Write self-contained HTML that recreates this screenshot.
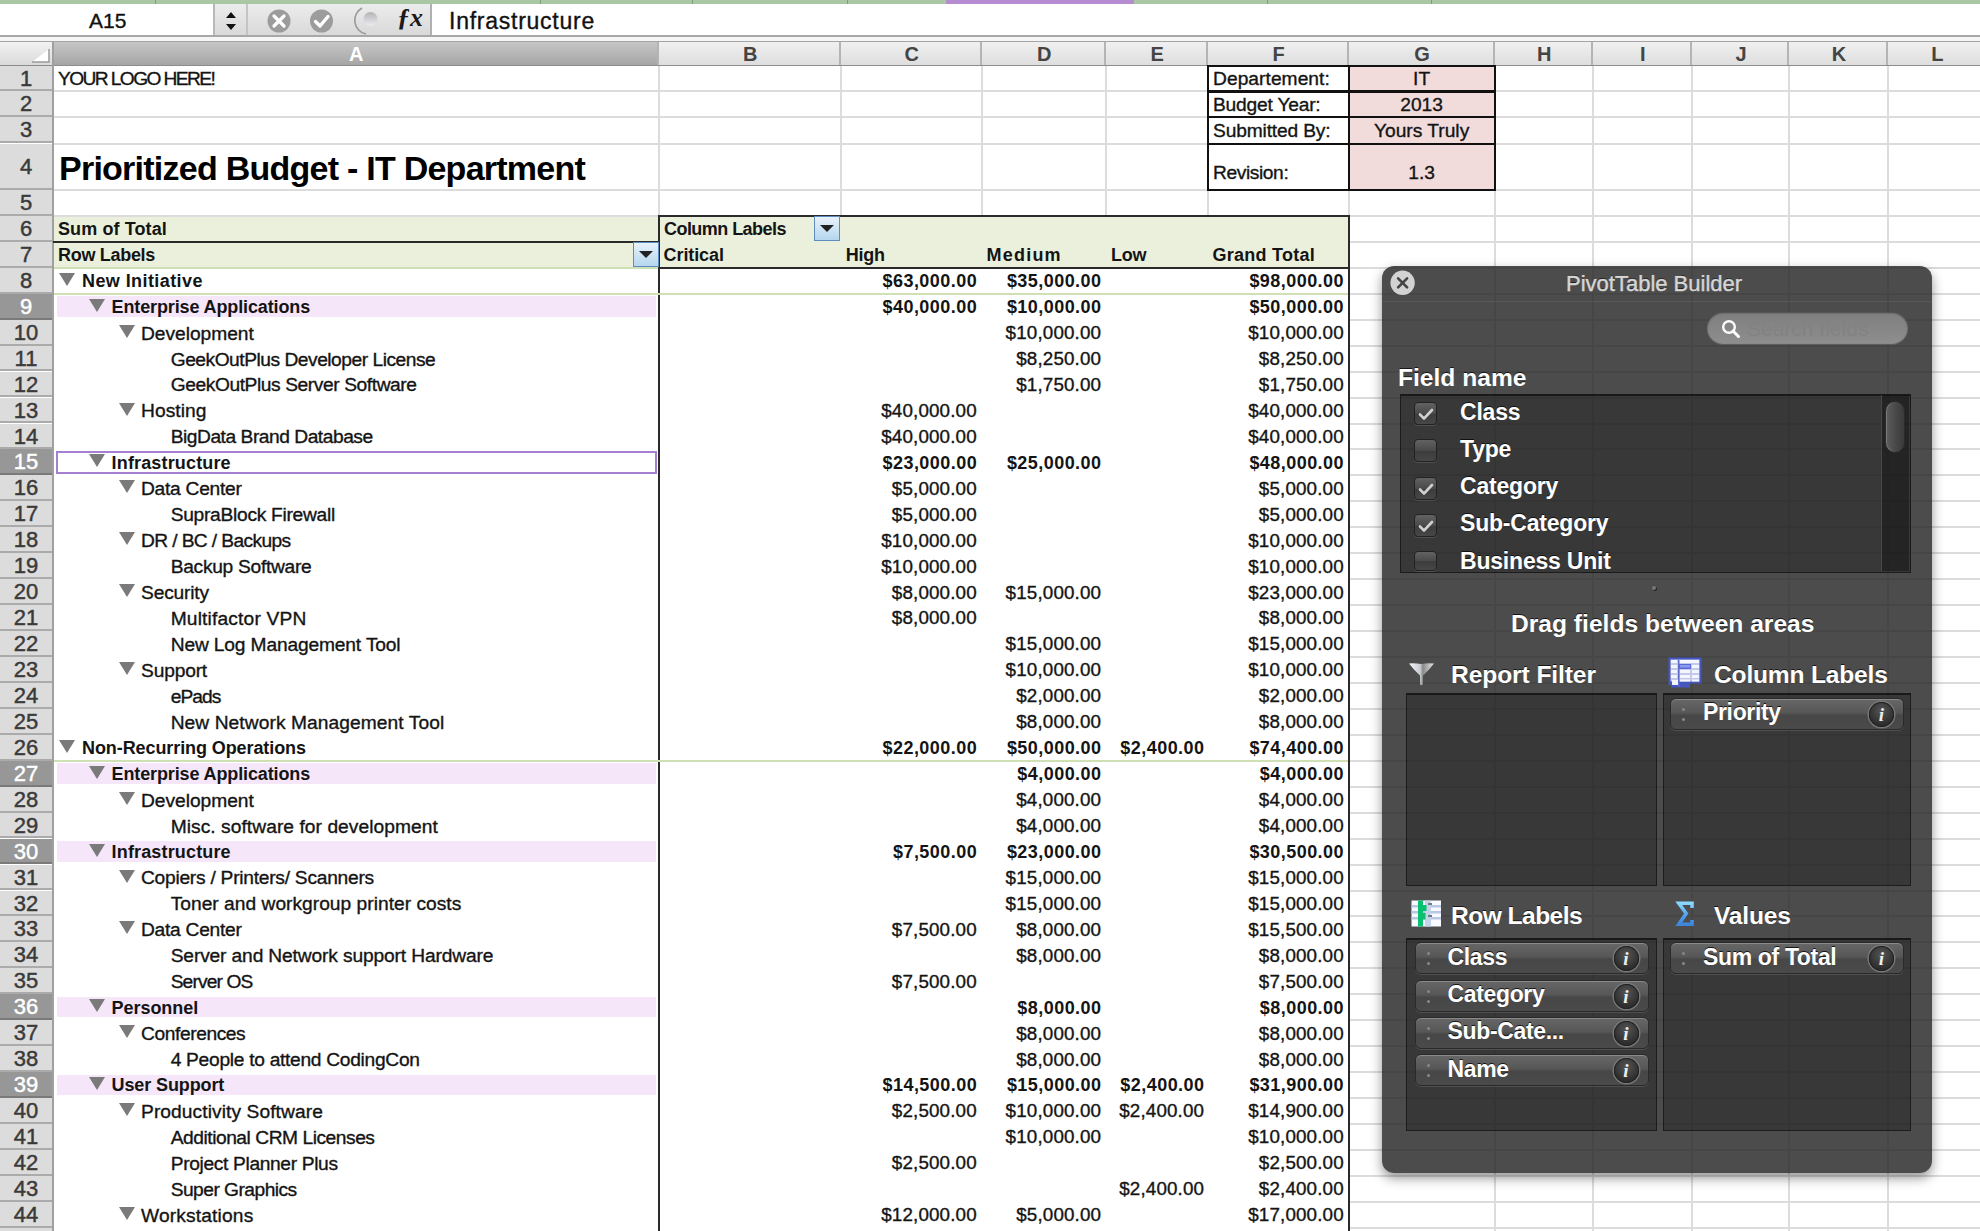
<!DOCTYPE html><html><head><meta charset="utf-8"><style>
*{margin:0;padding:0;box-sizing:border-box}
html,body{width:1980px;height:1231px;overflow:hidden;background:#fff}
body{position:relative;font-family:"Liberation Sans",sans-serif;color:#111}
.a{position:absolute}
.t{position:absolute;white-space:nowrap;font-size:19.2px;line-height:26px;color:#141414;-webkit-text-stroke:0.35px #141414}
.t.b{-webkit-text-stroke:0;font-size:18px}
.b{font-weight:bold}
.hl{position:absolute;height:2px;background:#dcdcdc}
.vl{position:absolute;width:2px;background:#dcdcdc}
.rh{position:absolute;left:0;width:52px;background:#dcdcdc;border-bottom:2px solid #ababab;text-align:center;font-size:22px;color:#3a3a3a;-webkit-text-stroke:0.45px #3a3a3a}
.rh.s{-webkit-text-stroke:0.45px #fff}
.rh.s{background:#979797;border-bottom-color:#7a7a7a;color:#fff}
.ch{position:absolute;top:42px;height:23px;background:linear-gradient(#f0f0f0,#dedede);border-right:2px solid #b4b4b4;text-align:center;font-size:20px;line-height:24px;color:#444;font-weight:bold;padding-left:3px}
.ch.s{background:linear-gradient(#c6c6c6,#a6a6a6);color:#fff}
.tri{position:absolute;width:0;height:0;border-left:8px solid transparent;border-right:8px solid transparent;border-top:13px solid #7a7a7a}
.num{position:absolute;white-space:nowrap;font-size:18.8px;line-height:26px;text-align:right;color:#141414;letter-spacing:0.16px;-webkit-text-stroke:0.35px #141414}
.num.b{-webkit-text-stroke:0;font-size:18px;letter-spacing:0.45px}

.pnl{position:absolute;left:1381.5px;top:266.0px;width:550.0px;height:906.5px;border-radius:12px;background:rgba(36,36,36,0.82);box-shadow:0 5px 12px rgba(0,0,0,0.42)}
.pt{position:absolute;white-space:nowrap;color:#fff;font-weight:bold;text-shadow:0 -1px 0 rgba(0,0,0,0.7)}
.box{position:absolute;background:rgba(14,14,14,0.33);border:1.5px solid rgba(0,0,0,0.5);border-top:2.5px solid rgba(0,0,0,0.55)}
.pill{position:absolute;height:32px;border-radius:6px;background:linear-gradient(#676767 0%,#575757 45%,#474747 55%,#4a4a4a 100%);border:1px solid #2a2a2a;box-shadow:inset 0 1px 0 #8a8a8a, 0 1px 0 rgba(255,255,255,0.12)}
.pill .pl{position:absolute;left:32px;top:-0.5px;line-height:28px;font-size:23px;letter-spacing:-0.35px;font-weight:bold;color:#fff;text-shadow:0 -1px 0 rgba(0,0,0,0.8)}
.pill .info{position:absolute;right:9px;top:3px;width:25px;height:25px;border-radius:50%;background:radial-gradient(circle at 50% 35%,#555,#2c2c2c 70%);box-shadow:0 0 0 1.5px #777, inset 0 0 0 1px #222}
.pill .info span{position:absolute;left:0;width:25px;top:0;line-height:25px;text-align:center;font-family:'Liberation Serif';font-style:italic;font-weight:bold;font-size:19px;color:#eee}
.pill .grip{position:absolute;left:11px;top:9px;width:3px;height:3px;border-radius:50%;background:#888;box-shadow:0 10px 0 #888}
.cb{position:absolute;left:1414px;width:23px;height:23px;border-radius:4px;background:linear-gradient(#626262,#4a4a4a 50%,#3c3c3c 52%,#474747);border:1px solid #222;box-shadow:0 1px 0 rgba(255,255,255,0.12)}
</style></head><body>
<div class="a" style="left:0;top:0;width:1980px;height:4px;background:#a9c7a3"></div>
<div class="a" style="left:946px;top:0;width:188px;height:4px;background:#b58bd2"></div>
<div class="a" style="left:155px;top:0;width:1px;height:4px;background:#7f9e7b"></div>
<div class="a" style="left:540px;top:0;width:1px;height:4px;background:#7f9e7b"></div>
<div class="a" style="left:692px;top:0;width:1px;height:4px;background:#7f9e7b"></div>
<div class="a" style="left:847px;top:0;width:1px;height:4px;background:#7f9e7b"></div>
<div class="a" style="left:1267px;top:0;width:1px;height:4px;background:#7f9e7b"></div>
<div class="a" style="left:1431px;top:0;width:1px;height:4px;background:#7f9e7b"></div>
<div class="a" style="left:0;top:4px;width:1980px;height:31px;background:#fff"></div>
<div class="a" style="left:214px;top:4px;width:217px;height:31px;background:linear-gradient(#ececec,#d9d9d9)"></div>
<div class="a" style="left:213px;top:4px;width:2px;height:31px;background:#b8b8b8"></div>
<div class="a" style="left:246px;top:4px;width:2px;height:31px;background:#c4c4c4"></div>
<div class="a" style="left:430px;top:4px;width:2px;height:31px;background:#b0b0b0"></div>
<div class="a" style="left:0;top:35px;width:1980px;height:2px;background:#a8a8a8"></div>
<div class="a" style="left:0;top:37px;width:1980px;height:4px;background:#f6f6f6"></div>
<div class="t" style="left:89px;top:7px;font-size:21px;line-height:28px;color:#111">A15</div>
<svg class="a" style="left:222px;top:10px" width="18" height="22" viewBox="0 0 18 22"><path d="M9 2 L14 8 L4 8 Z M9 20 L14 14 L4 14 Z" fill="#111"/></svg>
<svg class="a" style="left:262px;top:6px" width="175" height="30" viewBox="0 0 175 30">
<circle cx="17" cy="15" r="11.5" fill="#9c9c9c"/>
<path d="M12 10 L22 20 M22 10 L12 20" stroke="#fff" stroke-width="3.2" stroke-linecap="round"/>
<circle cx="59.5" cy="15" r="11.5" fill="#9c9c9c"/>
<path d="M53.5 15.5 L58 20 L66 10.5" stroke="#fff" stroke-width="3.4" fill="none" stroke-linecap="round" stroke-linejoin="round"/>
<path d="M100 2 A 14 14 0 0 0 104 28" stroke="#9a9a9a" stroke-width="1.6" fill="none"/>
<circle cx="108.5" cy="13" r="7" fill="url(#gd)"/>
<defs><linearGradient id="gd" x1="0" y1="0" x2="0" y2="1"><stop offset="0" stop-color="#b4b4b8"/><stop offset="1" stop-color="#ececf0"/></linearGradient></defs>
</svg>
<div class="t" style="left:397px;top:3px;font-family:'Liberation Serif';font-style:italic;font-weight:bold;font-size:26px;line-height:30px;color:#1a1a1a;-webkit-text-stroke:0">&#402;x</div>
<div class="t" style="left:449px;top:6px;font-size:23px;line-height:30px;letter-spacing:0.75px;color:#111">Infrastructure</div>
<div class="a" style="left:0;top:41px;width:1980px;height:1.5px;background:#a4a4a4"></div>
<div class="a" style="left:0;top:42px;width:53px;height:23px;background:linear-gradient(#f2f2f2,#dadada)"></div>
<svg class="a" style="left:30px;top:47px" width="22" height="16"><path d="M2 15 L19 15 L19 2 Z" fill="#fff"/><path d="M19 2 L19 15 L2 15" stroke="#9a9a9a" stroke-width="1.5" fill="none"/></svg>
<div class="ch s" style="left:52.7px;width:605.9px">A</div>
<div class="ch" style="left:658.6px;width:182.1px">B</div>
<div class="ch" style="left:840.7px;width:140.9px">C</div>
<div class="ch" style="left:981.6px;width:124.4px">D</div>
<div class="ch" style="left:1106.0px;width:101.5px">E</div>
<div class="ch" style="left:1207.5px;width:141.1px">F</div>
<div class="ch" style="left:1348.6px;width:146.0px">G</div>
<div class="ch" style="left:1494.6px;width:98.5px">H</div>
<div class="ch" style="left:1593.1px;width:98.5px">I</div>
<div class="ch" style="left:1691.6px;width:97.7px">J</div>
<div class="ch" style="left:1789.3px;width:98.5px">K</div>
<div class="ch" style="left:1887.8px;width:98.2px">L</div>
<div class="a" style="left:0;top:64.5px;width:1980px;height:1.5px;background:#8c8c8c"></div>
<div class="hl" style="left:53px;top:90.4px;width:1930px"></div>
<div class="hl" style="left:53px;top:116.3px;width:1930px"></div>
<div class="hl" style="left:53px;top:142.5px;width:1930px"></div>
<div class="hl" style="left:53px;top:188.8px;width:1930px"></div>
<div class="hl" style="left:53px;top:215.0px;width:1930px"></div>
<div class="hl" style="left:1349px;top:240.8px;width:640px"></div>
<div class="hl" style="left:1349px;top:266.8px;width:640px"></div>
<div class="hl" style="left:1349px;top:292.7px;width:640px"></div>
<div class="hl" style="left:1349px;top:318.7px;width:640px"></div>
<div class="hl" style="left:1349px;top:344.6px;width:640px"></div>
<div class="hl" style="left:1349px;top:370.6px;width:640px"></div>
<div class="hl" style="left:1349px;top:396.5px;width:640px"></div>
<div class="hl" style="left:1349px;top:422.5px;width:640px"></div>
<div class="hl" style="left:1349px;top:448.4px;width:640px"></div>
<div class="hl" style="left:1349px;top:474.4px;width:640px"></div>
<div class="hl" style="left:1349px;top:500.3px;width:640px"></div>
<div class="hl" style="left:1349px;top:526.2px;width:640px"></div>
<div class="hl" style="left:1349px;top:552.2px;width:640px"></div>
<div class="hl" style="left:1349px;top:578.1px;width:640px"></div>
<div class="hl" style="left:1349px;top:604.1px;width:640px"></div>
<div class="hl" style="left:1349px;top:630.0px;width:640px"></div>
<div class="hl" style="left:1349px;top:656.0px;width:640px"></div>
<div class="hl" style="left:1349px;top:681.9px;width:640px"></div>
<div class="hl" style="left:1349px;top:707.8px;width:640px"></div>
<div class="hl" style="left:1349px;top:733.8px;width:640px"></div>
<div class="hl" style="left:1349px;top:759.7px;width:640px"></div>
<div class="hl" style="left:1349px;top:785.7px;width:640px"></div>
<div class="hl" style="left:1349px;top:811.6px;width:640px"></div>
<div class="hl" style="left:1349px;top:837.6px;width:640px"></div>
<div class="hl" style="left:1349px;top:863.5px;width:640px"></div>
<div class="hl" style="left:1349px;top:889.5px;width:640px"></div>
<div class="hl" style="left:1349px;top:915.4px;width:640px"></div>
<div class="hl" style="left:1349px;top:941.3px;width:640px"></div>
<div class="hl" style="left:1349px;top:967.3px;width:640px"></div>
<div class="hl" style="left:1349px;top:993.2px;width:640px"></div>
<div class="hl" style="left:1349px;top:1019.2px;width:640px"></div>
<div class="hl" style="left:1349px;top:1045.1px;width:640px"></div>
<div class="hl" style="left:1349px;top:1071.1px;width:640px"></div>
<div class="hl" style="left:1349px;top:1097.0px;width:640px"></div>
<div class="hl" style="left:1349px;top:1123.0px;width:640px"></div>
<div class="hl" style="left:1349px;top:1148.9px;width:640px"></div>
<div class="hl" style="left:1349px;top:1174.8px;width:640px"></div>
<div class="hl" style="left:1349px;top:1200.8px;width:640px"></div>
<div class="hl" style="left:1349px;top:1226.7px;width:640px"></div>
<div class="hl" style="left:1349px;top:1252.7px;width:640px"></div>
<div class="vl" style="left:657.6px;top:66px;height:150.0px"></div>
<div class="vl" style="left:839.7px;top:66px;height:150.0px"></div>
<div class="vl" style="left:980.6px;top:66px;height:150.0px"></div>
<div class="vl" style="left:1105.0px;top:66px;height:150.0px"></div>
<div class="vl" style="left:1206.5px;top:66px;height:150.0px"></div>
<div class="vl" style="left:1347.6px;top:66px;height:1170px"></div>
<div class="vl" style="left:1493.6px;top:66px;height:1170px"></div>
<div class="vl" style="left:1592.1px;top:66px;height:1170px"></div>
<div class="vl" style="left:1690.6px;top:66px;height:1170px"></div>
<div class="vl" style="left:1788.3px;top:66px;height:1170px"></div>
<div class="vl" style="left:1886.8px;top:66px;height:1170px"></div>
<div class="vl" style="left:1985.0px;top:66px;height:1170px"></div>
<div class="rh" style="top:65.5px;height:25.9px;line-height:25.9px">1</div>
<div class="rh" style="top:91.4px;height:25.9px;line-height:25.9px">2</div>
<div class="rh" style="top:117.3px;height:26.2px;line-height:26.2px">3</div>
<div class="rh" style="top:143.5px;height:46.3px;line-height:46.3px">4</div>
<div class="rh" style="top:189.8px;height:26.2px;line-height:26.2px">5</div>
<div class="rh" style="top:216.0px;height:25.8px;line-height:25.8px">6</div>
<div class="rh" style="top:241.8px;height:26.0px;line-height:26.0px">7</div>
<div class="rh" style="top:267.8px;height:25.9px;line-height:25.9px">8</div>
<div class="rh s" style="top:293.7px;height:25.9px;line-height:25.9px">9</div>
<div class="rh" style="top:319.7px;height:25.9px;line-height:25.9px">10</div>
<div class="rh" style="top:345.6px;height:25.9px;line-height:25.9px">11</div>
<div class="rh" style="top:371.6px;height:25.9px;line-height:25.9px">12</div>
<div class="rh" style="top:397.5px;height:25.9px;line-height:25.9px">13</div>
<div class="rh" style="top:423.5px;height:25.9px;line-height:25.9px">14</div>
<div class="rh s" style="top:449.4px;height:25.9px;line-height:25.9px">15</div>
<div class="rh" style="top:475.4px;height:25.9px;line-height:25.9px">16</div>
<div class="rh" style="top:501.3px;height:25.9px;line-height:25.9px">17</div>
<div class="rh" style="top:527.2px;height:25.9px;line-height:25.9px">18</div>
<div class="rh" style="top:553.2px;height:25.9px;line-height:25.9px">19</div>
<div class="rh" style="top:579.1px;height:25.9px;line-height:25.9px">20</div>
<div class="rh" style="top:605.1px;height:25.9px;line-height:25.9px">21</div>
<div class="rh" style="top:631.0px;height:25.9px;line-height:25.9px">22</div>
<div class="rh" style="top:657.0px;height:25.9px;line-height:25.9px">23</div>
<div class="rh" style="top:682.9px;height:25.9px;line-height:25.9px">24</div>
<div class="rh" style="top:708.8px;height:25.9px;line-height:25.9px">25</div>
<div class="rh" style="top:734.8px;height:25.9px;line-height:25.9px">26</div>
<div class="rh s" style="top:760.7px;height:25.9px;line-height:25.9px">27</div>
<div class="rh" style="top:786.7px;height:25.9px;line-height:25.9px">28</div>
<div class="rh" style="top:812.6px;height:25.9px;line-height:25.9px">29</div>
<div class="rh s" style="top:838.6px;height:25.9px;line-height:25.9px">30</div>
<div class="rh" style="top:864.5px;height:25.9px;line-height:25.9px">31</div>
<div class="rh" style="top:890.5px;height:25.9px;line-height:25.9px">32</div>
<div class="rh" style="top:916.4px;height:25.9px;line-height:25.9px">33</div>
<div class="rh" style="top:942.3px;height:25.9px;line-height:25.9px">34</div>
<div class="rh" style="top:968.3px;height:25.9px;line-height:25.9px">35</div>
<div class="rh s" style="top:994.2px;height:25.9px;line-height:25.9px">36</div>
<div class="rh" style="top:1020.2px;height:25.9px;line-height:25.9px">37</div>
<div class="rh" style="top:1046.1px;height:25.9px;line-height:25.9px">38</div>
<div class="rh s" style="top:1072.1px;height:25.9px;line-height:25.9px">39</div>
<div class="rh" style="top:1098.0px;height:25.9px;line-height:25.9px">40</div>
<div class="rh" style="top:1124.0px;height:25.9px;line-height:25.9px">41</div>
<div class="rh" style="top:1149.9px;height:25.9px;line-height:25.9px">42</div>
<div class="rh" style="top:1175.8px;height:25.9px;line-height:25.9px">43</div>
<div class="rh" style="top:1201.8px;height:25.9px;line-height:25.9px">44</div>
<div class="rh" style="top:1227.7px;height:25.9px;line-height:25.9px">45</div>
<div class="a" style="left:51.5px;top:42px;width:2px;height:1200px;background:#a0a0a0"></div>
<div class="t" style="left:58.0px;top:66.3px;letter-spacing:-1.6px">YOUR LOGO HERE!</div>
<div class="t b" style="left:59px;top:147.8px;font-size:34px;line-height:40px;letter-spacing:-0.75px;color:#000">Prioritized Budget - IT Department</div>
<div class="a" style="left:1348.6px;top:66.0px;width:146.0px;height:124.3px;background:#f2dcdb"></div>
<div class="a" style="left:1206.5px;top:64.5px;width:289.1px;height:2.2px;background:#111"></div>
<div class="a" style="left:1206.5px;top:90.4px;width:289.1px;height:2.2px;background:#111"></div>
<div class="a" style="left:1206.5px;top:116.3px;width:289.1px;height:2.2px;background:#111"></div>
<div class="a" style="left:1206.5px;top:142.5px;width:289.1px;height:2.2px;background:#111"></div>
<div class="a" style="left:1206.5px;top:188.8px;width:289.1px;height:2.2px;background:#111"></div>
<div class="a" style="left:1206.5px;top:64.5px;width:2.2px;height:126.3px;background:#111"></div>
<div class="a" style="left:1347.6px;top:64.5px;width:2.2px;height:126.3px;background:#111"></div>
<div class="a" style="left:1493.6px;top:64.5px;width:2.2px;height:126.3px;background:#111"></div>
<div class="t" style="left:1213px;top:66.3px;letter-spacing:0.05px">Departement:</div>
<div class="t" style="left:1348.6px;width:146.0px;text-align:center;top:66.3px">IT</div>
<div class="t" style="left:1213px;top:92.2px;letter-spacing:-0.2px">Budget Year:</div>
<div class="t" style="left:1348.6px;width:146.0px;text-align:center;top:92.2px">2013</div>
<div class="t" style="left:1213px;top:118.4px;letter-spacing:-0.15px">Submitted By:</div>
<div class="t" style="left:1348.6px;width:146.0px;text-align:center;top:118.4px">Yours Truly</div>
<div class="t" style="left:1213px;top:159.8px;letter-spacing:-0.4px">Revision:</div>
<div class="t" style="left:1348.6px;width:146.0px;text-align:center;top:159.8px">1.3</div>
<div class="a" style="left:53.7px;top:217.0px;width:1293.9px;height:50.8px;background:#ebf0dd"></div>
<div class="a" style="left:657.6px;top:215.0px;width:692.0px;height:2.2px;background:#2a2a2a"></div>
<div class="a" style="left:52.7px;top:240.8px;width:605.9px;height:2.2px;background:#2a2a2a"></div>
<div class="a" style="left:657.6px;top:266.8px;width:692.0px;height:2.2px;background:#2a2a2a"></div>
<div class="a" style="left:53.7px;top:266.8px;width:603.9px;height:2px;background:#cfe0b4"></div>
<div class="a" style="left:657.6px;top:215.0px;width:2.2px;height:1240px;background:#2a2a2a"></div>
<div class="a" style="left:1347.6px;top:215.0px;width:2.2px;height:1240px;background:#2a2a2a"></div>
<div class="a" style="left:53.7px;top:292.7px;width:1293.9px;height:2px;background:#cfe0b4"></div>
<div class="a" style="left:53.7px;top:759.7px;width:1293.9px;height:2px;background:#cfe0b4"></div>
<div class="a" style="left:632.5px;top:242.0px;width:26px;height:25px;border:1.5px solid #5e8cc0;background:linear-gradient(#e8f2fa,#b5d6ee)"></div>
<svg class="a" style="left:637.5px;top:250.0px" width="16" height="9"><path d="M1 1 L15 1 L8 8 Z" fill="#222"/></svg>
<div class="a" style="left:813.5px;top:216.2px;width:26px;height:25px;border:1.5px solid #5e8cc0;background:linear-gradient(#e8f2fa,#b5d6ee)"></div>
<svg class="a" style="left:818.5px;top:224.2px" width="16" height="9"><path d="M1 1 L15 1 L8 8 Z" fill="#222"/></svg>
<div class="t b" style="left:58.0px;top:216.1px;letter-spacing:0.1px">Sum of Total</div>
<div class="t b" style="left:58.0px;top:242.1px;letter-spacing:-0.3px">Row Labels</div>
<div class="t b" style="left:664.0px;top:216.1px;letter-spacing:-0.55px">Column Labels</div>
<div class="t b" style="left:663.6px;top:242.1px;letter-spacing:-0.1px">Critical</div>
<div class="t b" style="left:845.7px;top:242.1px;letter-spacing:-0.2px">High</div>
<div class="t b" style="left:986.6px;top:242.1px;letter-spacing:1.2px">Medium</div>
<div class="t b" style="left:1111.0px;top:242.1px;letter-spacing:-0.2px">Low</div>
<div class="t b" style="left:1212.5px;top:242.1px;letter-spacing:0.25px">Grand Total</div>
<div class="tri" style="left:59.0px;top:272.8px"></div>
<div class="t b" style="left:82.0px;top:268.0px;letter-spacing:0.415px">New Initiative</div>
<div class="num b" style="right:1002.9px;top:268.0px">$63,000.00</div>
<div class="num b" style="right:878.5px;top:268.0px">$35,000.00</div>
<div class="num b" style="right:636.0px;top:268.0px">$98,000.00</div>
<div class="a" style="left:56.5px;top:296.4px;width:599px;height:20.6px;background:#f5e6fa"></div>
<div class="tri" style="left:89.0px;top:298.7px"></div>
<div class="t b" style="left:111.6px;top:294.0px;letter-spacing:-0.127px">Enterprise Applications</div>
<div class="num b" style="right:1002.9px;top:294.0px">$40,000.00</div>
<div class="num b" style="right:878.5px;top:294.0px">$10,000.00</div>
<div class="num b" style="right:636.0px;top:294.0px">$50,000.00</div>
<div class="tri" style="left:118.5px;top:324.7px"></div>
<div class="t" style="left:141.0px;top:320.5px;letter-spacing:-0.030px">Development</div>
<div class="num" style="right:878.8px;top:320.0px">$10,000.00</div>
<div class="num" style="right:636.2px;top:320.0px">$10,000.00</div>
<div class="t" style="left:170.7px;top:346.5px;letter-spacing:-0.475px">GeekOutPlus Developer License</div>
<div class="num" style="right:878.8px;top:346.0px">$8,250.00</div>
<div class="num" style="right:636.2px;top:346.0px">$8,250.00</div>
<div class="t" style="left:170.7px;top:372.4px;letter-spacing:-0.412px">GeekOutPlus Server Software</div>
<div class="num" style="right:878.8px;top:371.9px">$1,750.00</div>
<div class="num" style="right:636.2px;top:371.9px">$1,750.00</div>
<div class="tri" style="left:118.5px;top:402.5px"></div>
<div class="t" style="left:141.0px;top:398.4px;letter-spacing:0.050px">Hosting</div>
<div class="num" style="right:1003.2px;top:397.9px">$40,000.00</div>
<div class="num" style="right:636.2px;top:397.9px">$40,000.00</div>
<div class="t" style="left:170.7px;top:424.3px;letter-spacing:-0.467px">BigData Brand Database</div>
<div class="num" style="right:1003.2px;top:423.8px">$40,000.00</div>
<div class="num" style="right:636.2px;top:423.8px">$40,000.00</div>
<div class="a" style="left:55.5px;top:450.6px;width:601px;height:23.5px;border:2px solid #a57fd0"></div>
<div class="tri" style="left:89.0px;top:454.4px"></div>
<div class="t b" style="left:111.6px;top:449.7px;letter-spacing:0.154px">Infrastructure</div>
<div class="num b" style="right:1002.9px;top:449.7px">$23,000.00</div>
<div class="num b" style="right:878.5px;top:449.7px">$25,000.00</div>
<div class="num b" style="right:636.0px;top:449.7px">$48,000.00</div>
<div class="tri" style="left:118.5px;top:480.4px"></div>
<div class="t" style="left:141.0px;top:476.2px;letter-spacing:-0.260px">Data Center</div>
<div class="num" style="right:1003.2px;top:475.7px">$5,000.00</div>
<div class="num" style="right:636.2px;top:475.7px">$5,000.00</div>
<div class="t" style="left:170.7px;top:502.1px;letter-spacing:-0.278px">SupraBlock Firewall</div>
<div class="num" style="right:1003.2px;top:501.6px">$5,000.00</div>
<div class="num" style="right:636.2px;top:501.6px">$5,000.00</div>
<div class="tri" style="left:118.5px;top:532.2px"></div>
<div class="t" style="left:141.0px;top:528.1px;letter-spacing:-0.613px">DR / BC / Backups</div>
<div class="num" style="right:1003.2px;top:527.6px">$10,000.00</div>
<div class="num" style="right:636.2px;top:527.6px">$10,000.00</div>
<div class="t" style="left:170.7px;top:554.0px;letter-spacing:-0.286px">Backup Software</div>
<div class="num" style="right:1003.2px;top:553.5px">$10,000.00</div>
<div class="num" style="right:636.2px;top:553.5px">$10,000.00</div>
<div class="tri" style="left:118.5px;top:584.1px"></div>
<div class="t" style="left:141.0px;top:580.0px;letter-spacing:-0.171px">Security</div>
<div class="num" style="right:1003.2px;top:579.5px">$8,000.00</div>
<div class="num" style="right:878.8px;top:579.5px">$15,000.00</div>
<div class="num" style="right:636.2px;top:579.5px">$23,000.00</div>
<div class="t" style="left:170.7px;top:605.9px;letter-spacing:0.164px">Multifactor VPN</div>
<div class="num" style="right:1003.2px;top:605.4px">$8,000.00</div>
<div class="num" style="right:636.2px;top:605.4px">$8,000.00</div>
<div class="t" style="left:170.7px;top:631.9px;letter-spacing:-0.150px">New Log Management Tool</div>
<div class="num" style="right:878.8px;top:631.4px">$15,000.00</div>
<div class="num" style="right:636.2px;top:631.4px">$15,000.00</div>
<div class="tri" style="left:118.5px;top:662.0px"></div>
<div class="t" style="left:141.0px;top:657.8px;letter-spacing:-0.167px">Support</div>
<div class="num" style="right:878.8px;top:657.3px">$10,000.00</div>
<div class="num" style="right:636.2px;top:657.3px">$10,000.00</div>
<div class="t" style="left:170.7px;top:683.7px;letter-spacing:-0.950px">ePads</div>
<div class="num" style="right:878.8px;top:683.2px">$2,000.00</div>
<div class="num" style="right:636.2px;top:683.2px">$2,000.00</div>
<div class="t" style="left:170.7px;top:709.7px;letter-spacing:0.073px">New Network Management Tool</div>
<div class="num" style="right:878.8px;top:709.2px">$8,000.00</div>
<div class="num" style="right:636.2px;top:709.2px">$8,000.00</div>
<div class="tri" style="left:59.0px;top:739.8px"></div>
<div class="t b" style="left:82.0px;top:735.0px;letter-spacing:-0.087px">Non-Recurring Operations</div>
<div class="num b" style="right:1002.9px;top:735.0px">$22,000.00</div>
<div class="num b" style="right:878.5px;top:735.0px">$50,000.00</div>
<div class="num b" style="right:775.5px;top:735.0px">$2,400.00</div>
<div class="num b" style="right:636.0px;top:735.0px">$74,400.00</div>
<div class="a" style="left:56.5px;top:763.4px;width:599px;height:20.6px;background:#f5e6fa"></div>
<div class="tri" style="left:89.0px;top:765.7px"></div>
<div class="t b" style="left:111.6px;top:761.0px;letter-spacing:-0.127px">Enterprise Applications</div>
<div class="num b" style="right:878.5px;top:761.0px">$4,000.00</div>
<div class="num b" style="right:636.0px;top:761.0px">$4,000.00</div>
<div class="tri" style="left:118.5px;top:791.7px"></div>
<div class="t" style="left:141.0px;top:787.5px;letter-spacing:-0.030px">Development</div>
<div class="num" style="right:878.8px;top:787.0px">$4,000.00</div>
<div class="num" style="right:636.2px;top:787.0px">$4,000.00</div>
<div class="t" style="left:170.7px;top:813.5px;letter-spacing:0.055px">Misc. software for development</div>
<div class="num" style="right:878.8px;top:813.0px">$4,000.00</div>
<div class="num" style="right:636.2px;top:813.0px">$4,000.00</div>
<div class="a" style="left:56.5px;top:841.3px;width:599px;height:20.6px;background:#f5e6fa"></div>
<div class="tri" style="left:89.0px;top:843.6px"></div>
<div class="t b" style="left:111.6px;top:838.8px;letter-spacing:0.154px">Infrastructure</div>
<div class="num b" style="right:1002.9px;top:838.8px">$7,500.00</div>
<div class="num b" style="right:878.5px;top:838.8px">$23,000.00</div>
<div class="num b" style="right:636.0px;top:838.8px">$30,500.00</div>
<div class="tri" style="left:118.5px;top:869.5px"></div>
<div class="t" style="left:141.0px;top:865.4px;letter-spacing:-0.252px">Copiers / Printers/ Scanners</div>
<div class="num" style="right:878.8px;top:864.9px">$15,000.00</div>
<div class="num" style="right:636.2px;top:864.9px">$15,000.00</div>
<div class="t" style="left:170.7px;top:891.3px;letter-spacing:0.016px">Toner and workgroup printer costs</div>
<div class="num" style="right:878.8px;top:890.8px">$15,000.00</div>
<div class="num" style="right:636.2px;top:890.8px">$15,000.00</div>
<div class="tri" style="left:118.5px;top:921.4px"></div>
<div class="t" style="left:141.0px;top:917.2px;letter-spacing:-0.260px">Data Center</div>
<div class="num" style="right:1003.2px;top:916.7px">$7,500.00</div>
<div class="num" style="right:878.8px;top:916.7px">$8,000.00</div>
<div class="num" style="right:636.2px;top:916.7px">$15,500.00</div>
<div class="t" style="left:170.7px;top:943.2px;letter-spacing:-0.138px">Server and Network support Hardware</div>
<div class="num" style="right:878.8px;top:942.7px">$8,000.00</div>
<div class="num" style="right:636.2px;top:942.7px">$8,000.00</div>
<div class="t" style="left:170.7px;top:969.1px;letter-spacing:-0.875px">Server OS</div>
<div class="num" style="right:1003.2px;top:968.6px">$7,500.00</div>
<div class="num" style="right:636.2px;top:968.6px">$7,500.00</div>
<div class="a" style="left:56.5px;top:996.9px;width:599px;height:20.6px;background:#f5e6fa"></div>
<div class="tri" style="left:89.0px;top:999.2px"></div>
<div class="t b" style="left:111.6px;top:994.5px;letter-spacing:-0.062px">Personnel</div>
<div class="num b" style="right:878.5px;top:994.5px">$8,000.00</div>
<div class="num b" style="right:636.0px;top:994.5px">$8,000.00</div>
<div class="tri" style="left:118.5px;top:1025.2px"></div>
<div class="t" style="left:141.0px;top:1021.0px;letter-spacing:-0.410px">Conferences</div>
<div class="num" style="right:878.8px;top:1020.5px">$8,000.00</div>
<div class="num" style="right:636.2px;top:1020.5px">$8,000.00</div>
<div class="t" style="left:170.7px;top:1047.0px;letter-spacing:-0.289px">4 People to attend CodingCon</div>
<div class="num" style="right:878.8px;top:1046.5px">$8,000.00</div>
<div class="num" style="right:636.2px;top:1046.5px">$8,000.00</div>
<div class="a" style="left:56.5px;top:1074.8px;width:599px;height:20.6px;background:#f5e6fa"></div>
<div class="tri" style="left:89.0px;top:1077.1px"></div>
<div class="t b" style="left:111.6px;top:1072.3px;letter-spacing:-0.118px">User Support</div>
<div class="num b" style="right:1002.9px;top:1072.3px">$14,500.00</div>
<div class="num b" style="right:878.5px;top:1072.3px">$15,000.00</div>
<div class="num b" style="right:775.5px;top:1072.3px">$2,400.00</div>
<div class="num b" style="right:636.0px;top:1072.3px">$31,900.00</div>
<div class="tri" style="left:118.5px;top:1103.0px"></div>
<div class="t" style="left:141.0px;top:1098.9px;letter-spacing:0.080px">Productivity Software</div>
<div class="num" style="right:1003.2px;top:1098.4px">$2,500.00</div>
<div class="num" style="right:878.8px;top:1098.4px">$10,000.00</div>
<div class="num" style="right:775.8px;top:1098.4px">$2,400.00</div>
<div class="num" style="right:636.2px;top:1098.4px">$14,900.00</div>
<div class="t" style="left:170.7px;top:1124.8px;letter-spacing:-0.459px">Additional CRM Licenses</div>
<div class="num" style="right:878.8px;top:1124.3px">$10,000.00</div>
<div class="num" style="right:636.2px;top:1124.3px">$10,000.00</div>
<div class="t" style="left:170.7px;top:1150.7px;letter-spacing:-0.342px">Project Planner Plus</div>
<div class="num" style="right:1003.2px;top:1150.2px">$2,500.00</div>
<div class="num" style="right:636.2px;top:1150.2px">$2,500.00</div>
<div class="t" style="left:170.7px;top:1176.7px;letter-spacing:-0.523px">Super Graphics</div>
<div class="num" style="right:775.8px;top:1176.2px">$2,400.00</div>
<div class="num" style="right:636.2px;top:1176.2px">$2,400.00</div>
<div class="tri" style="left:118.5px;top:1206.8px"></div>
<div class="t" style="left:141.0px;top:1202.6px;letter-spacing:0.155px">Workstations</div>
<div class="num" style="right:1003.2px;top:1202.1px">$12,000.00</div>
<div class="num" style="right:878.8px;top:1202.1px">$5,000.00</div>
<div class="num" style="right:636.2px;top:1202.1px">$17,000.00</div>
<div class="pnl"></div>
<div class="a" style="left:1382px;top:301px;width:549px;height:1px;background:rgba(255,255,255,0.07)"></div>
<svg class="a" style="left:1389px;top:269px" width="28" height="28"><circle cx="13.6" cy="13.8" r="12.2" fill="#d2d2d2"/><path d="M9.1 9.3 L18.1 18.3 M18.1 9.3 L9.1 18.3" stroke="#444" stroke-width="2.6" stroke-linecap="round"/></svg>
<div class="pt" style="left:1566px;top:271px;font-size:22px;line-height:26px;font-weight:normal;color:#d6d6d6;-webkit-text-stroke:0.45px #d6d6d6">PivotTable Builder</div>
<div class="a" style="left:1707px;top:311.5px;width:201px;height:32px;border-radius:16px;background:linear-gradient(#7e7e7e,#8e8e8e);box-shadow:inset 0 1px 2px rgba(0,0,0,0.45), 0 1px 0 rgba(255,255,255,0.1)"></div>
<svg class="a" style="left:1719px;top:317px" width="24" height="24"><circle cx="10" cy="10" r="5.8" stroke="#fbfbfb" stroke-width="2.4" fill="none"/><path d="M14 14 L19.5 19.5" stroke="#fbfbfb" stroke-width="3" stroke-linecap="round"/></svg>
<div class="pt" style="left:1747px;top:316px;font-size:21px;line-height:26px;font-weight:normal;color:#828282;text-shadow:none">Search fields</div>
<div class="pt" style="left:1398px;top:364px;font-size:24.6px;line-height:28px">Field name</div>
<div class="box" style="left:1399.5px;top:393.5px;width:511px;height:179px"></div>
<div class="a" style="left:1881px;top:395px;width:28px;height:176px;background:rgba(15,15,15,0.5);border-left:1px solid #474747"></div>
<div class="a" style="left:1885px;top:400.5px;width:20px;height:52px;border-radius:10px;background:linear-gradient(90deg,#5e5e5e,#4a4a4a 50%,#3a3a3a);border:1px solid #2a2a2a;box-shadow:inset 1px 0 0 #7a7a7a"></div>
<div class="cb" style="top:402.0px;height:23.0px"></div>
<svg class="a" style="left:1414px;top:402.0px" width="24" height="24"><path d="M6 12.5 L10 16.5 L18 8" stroke="#d0d0d0" stroke-width="2.6" fill="none" stroke-linecap="round" stroke-linejoin="round"/></svg>
<div class="pt" style="left:1460px;top:398.5px;font-size:23px;line-height:26px;letter-spacing:-0.2px">Class</div>
<div class="cb" style="top:439.3px;height:23.0px"></div>
<div class="pt" style="left:1460px;top:435.8px;font-size:23px;line-height:26px;letter-spacing:-0.2px">Type</div>
<div class="cb" style="top:476.6px;height:23.0px"></div>
<svg class="a" style="left:1414px;top:476.6px" width="24" height="24"><path d="M6 12.5 L10 16.5 L18 8" stroke="#d0d0d0" stroke-width="2.6" fill="none" stroke-linecap="round" stroke-linejoin="round"/></svg>
<div class="pt" style="left:1460px;top:473.1px;font-size:23px;line-height:26px;letter-spacing:-0.2px">Category</div>
<div class="cb" style="top:513.9px;height:23.0px"></div>
<svg class="a" style="left:1414px;top:513.9px" width="24" height="24"><path d="M6 12.5 L10 16.5 L18 8" stroke="#d0d0d0" stroke-width="2.6" fill="none" stroke-linecap="round" stroke-linejoin="round"/></svg>
<div class="pt" style="left:1460px;top:510.4px;font-size:23px;line-height:26px;letter-spacing:-0.2px">Sub-Category</div>
<div class="cb" style="top:551.2px;height:19.8px"></div>
<div class="pt" style="left:1460px;top:547.7px;font-size:23px;line-height:26px;letter-spacing:-0.2px">Business Unit</div>
<div class="a" style="left:1652px;top:586px;width:4px;height:4px;border-radius:50%;background:#777;box-shadow:1px 1px 0 #222"></div>
<div class="pt" style="left:1511px;top:610px;font-size:24.6px;line-height:28px">Drag fields between areas</div>
<div class="pt" style="left:1451px;top:661px;font-size:24.6px;line-height:28px;letter-spacing:-0.1px">Report Filter</div>
<div class="pt" style="left:1714px;top:661px;font-size:24.6px;line-height:28px;letter-spacing:-0.2px">Column Labels</div>
<div class="pt" style="left:1451px;top:901.5px;font-size:24.6px;line-height:28px;letter-spacing:-0.55px">Row Labels</div>
<div class="pt" style="left:1714px;top:901.5px;font-size:24.6px;line-height:28px;letter-spacing:-0.2px">Values</div>
<svg class="a" style="left:1407px;top:660px" width="30" height="28"><defs><linearGradient id="fg" x1="0" x2="1" y1="0" y2="0"><stop offset="0" stop-color="#f4f8fb"/><stop offset="0.45" stop-color="#c8ccd0"/><stop offset="0.55" stop-color="#8a8a8a"/><stop offset="1" stop-color="#e6e9ec"/></linearGradient></defs><path d="M2 3.5 Q8 3 14 4 Q20 3 27 3.5 Q22 10 16 15.5 L15.8 24.5 Q14.5 26 13.2 24.5 L13 15.5 Q7 10 2 3.5 Z" fill="url(#fg)"/></svg>
<svg class="a" style="left:1668px;top:657px" width="35" height="32">
<path d="M0.5 0.5 H33.5 V26.5 H22 V30.5 H3 V28 H0.5 Z" fill="#4656c0"/>
<rect x="2.5" y="2.5" width="29" height="22" fill="#c4c8e8"/>
<g fill="#f4f6ff"><rect x="3" y="3" width="6" height="3"/><rect x="11" y="3" width="20" height="3"/>
<rect x="3" y="8" width="6" height="3"/><rect x="3" y="13" width="6" height="3"/><rect x="3" y="18" width="6" height="3"/><rect x="4" y="23" width="6" height="5"/>
<rect x="12" y="13" width="10" height="3"/><rect x="12" y="18" width="10" height="3"/><rect x="12" y="22.5" width="10" height="2"/>
<rect x="24" y="8" width="7" height="3"/><rect x="24" y="13" width="7" height="3"/><rect x="24" y="18" width="7" height="3"/><rect x="24" y="22.5" width="7" height="2"/></g>
<rect x="11" y="7" width="12" height="5" fill="#5a6ad8"/><rect x="12" y="8" width="10" height="2.5" fill="#8a9af0"/>
<rect x="10" y="3" width="1.5" height="27" fill="#5e6cc8"/>
</svg>
<svg class="a" style="left:1411px;top:900px" width="31" height="27">
<rect x="0.5" y="0.5" width="29.5" height="26" fill="#f8faff"/>
<g fill="#b8c8e4"><rect x="0.5" y="5" width="29.5" height="2.5"/><rect x="0.5" y="11" width="29.5" height="2.5"/><rect x="0.5" y="17" width="29.5" height="2.5"/></g>
<g fill="#c4d2ea"><rect x="14" y="0.5" width="6" height="26"/></g>
<path d="M7 0.5 H12 V5 H15.5 V11 H12 V13 H14.5 V19.5 H12 V26.5 H7 Z" fill="#08c070"/>
<g fill="#707880"><rect x="17" y="3" width="4" height="2"/><rect x="17" y="15" width="4" height="2"/></g>
</svg>
<svg class="a" style="left:1672px;top:898px" width="26" height="32"><defs><linearGradient id="sg" x1="0" x2="0" y1="0" y2="1"><stop offset="0" stop-color="#8ad8ff"/><stop offset="0.5" stop-color="#58a6ee"/><stop offset="1" stop-color="#3c86de"/></linearGradient></defs><path d="M20 10 V5.2 H6.8 L14.2 15.5 L6.8 26.2 H20 V22" fill="none" stroke="url(#sg)" stroke-width="3.6" stroke-linejoin="miter" stroke-miterlimit="3"/></svg>
<div class="box" style="left:1405.5px;top:693px;width:251.5px;height:193px"></div>
<div class="box" style="left:1663px;top:693px;width:248px;height:193px"></div>
<div class="box" style="left:1405.5px;top:938px;width:251.5px;height:193px"></div>
<div class="box" style="left:1663px;top:938px;width:248px;height:193px"></div>
<div class="pill" style="left:1670px;top:697.8px;width:234px"><div class="grip"></div><div class="pl">Priority</div><div class="info"><span>i</span></div></div>
<div class="pill" style="left:1414.5px;top:942.4px;width:234px"><div class="grip"></div><div class="pl">Class</div><div class="info"><span>i</span></div></div>
<div class="pill" style="left:1414.5px;top:979.6px;width:234px"><div class="grip"></div><div class="pl">Category</div><div class="info"><span>i</span></div></div>
<div class="pill" style="left:1414.5px;top:1016.8px;width:234px"><div class="grip"></div><div class="pl">Sub-Cate...</div><div class="info"><span>i</span></div></div>
<div class="pill" style="left:1414.5px;top:1054.0px;width:234px"><div class="grip"></div><div class="pl">Name</div><div class="info"><span>i</span></div></div>
<div class="pill" style="left:1670px;top:942.4px;width:234px"><div class="grip"></div><div class="pl">Sum of Total</div><div class="info"><span>i</span></div></div>
</body></html>
